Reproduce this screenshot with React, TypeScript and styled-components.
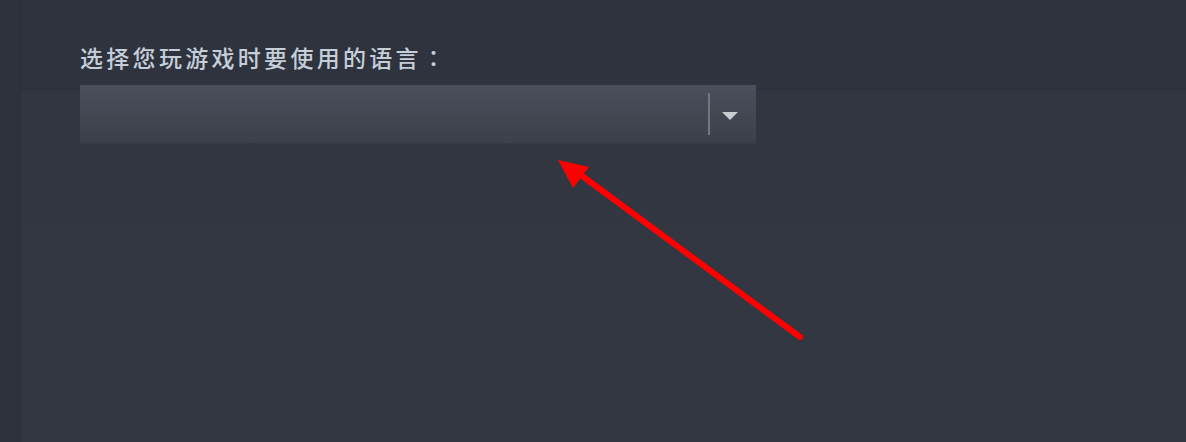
import React from "react";
import styled, { createGlobalStyle } from "styled-components";

const Global = createGlobalStyle`
  html, body { margin: 0; padding: 0; background: #30343e; }
  #root { width: 1186px; height: 442px; overflow: hidden; }
`;

const Page = styled.div`
  position: relative;
  display: flex;
  width: 1186px;
  height: 442px;
  background: linear-gradient(
    to bottom,
    #2f333e 0,
    #2f333e 88px,
    #2d313b 88px,
    #2d313b 90px,
    #323641 90px,
    #333742 100%
  );
  font-family: "Noto Sans CJK SC", "Noto Sans", sans-serif;
`;

const Rail = styled.div`
  width: 20px;
  flex: none;
  background: #2e323b;
  border-right: 1px solid #2c3039;
`;

const Main = styled.div`
  flex: 1;
  display: flex;
  flex-direction: column;
  padding: 41px 0 0 59px;
`;

const Label = styled.div`
  color: #c5ced9;
  font-size: 23px;
  font-weight: 500;
  letter-spacing: 3.3px;
  line-height: 32px;
  margin-bottom: 12px;
`;

const Colon = styled.span`
  font-family: "Noto Sans CJK JP", "Noto Sans CJK SC", sans-serif;
`;

const Select = styled.div`
  width: 676px;
  height: 58px;
  display: flex;
  align-items: center;
  justify-content: flex-end;
  background: linear-gradient(to bottom, #4a4f5b 0%, #434752 50%, #3c404a 100%);
  box-shadow: 0 1px 0 #363a44;
`;

const Divider = styled.div`
  width: 2px;
  height: 42px;
  background: #72767f;
  margin-right: 12px;
`;

const Caret = styled.div`
  width: 0;
  height: 0;
  border-left: 8px solid transparent;
  border-right: 8px solid transparent;
  border-top: 8px solid #c9ccd1;
  margin-right: 18px;
  margin-top: 3px;
`;

const Arrow = styled.svg`
  position: absolute;
  left: 0;
  top: 0;
  pointer-events: none;
`;

export default function App() {
  return (
    <>
      <Global />
      <Page>
        <Rail />
        <Main>
          <Label>
            选择您玩游戏时要使用的语言<Colon>：</Colon>
          </Label>
          <Select>
            <Divider />
            <Caret />
          </Select>
        </Main>
        <Arrow width="1186" height="442" viewBox="0 0 1186 442">
          <line
            x1="800"
            y1="337"
            x2="578"
            y2="173"
            stroke="#ff0000"
            strokeWidth="6"
            strokeLinecap="round"
          />
          <polygon points="558,160 589,167 573,188" fill="#ff0000" />
        </Arrow>
      </Page>
    </>
  );
}
